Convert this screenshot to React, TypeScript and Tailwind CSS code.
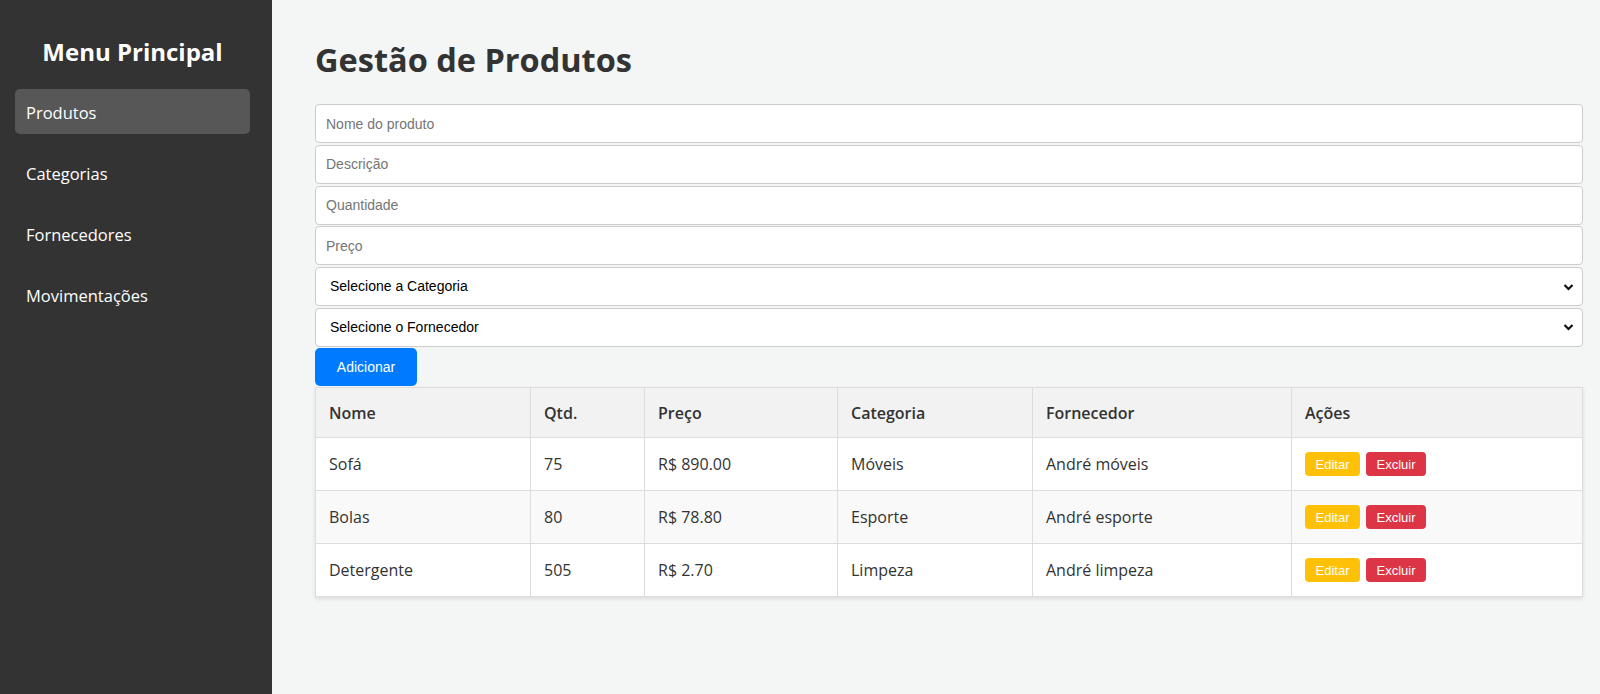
const menu = ["Produtos", "Categorias", "Fornecedores", "Movimentações"];

const produtos = [
  { nome: "Sofá", qtd: 75, preco: "R$ 890.00", categoria: "Móveis", fornecedor: "André móveis" },
  { nome: "Bolas", qtd: 80, preco: "R$ 78.80", categoria: "Esporte", fornecedor: "André esporte" },
  { nome: "Detergente", qtd: 505, preco: "R$ 2.70", categoria: "Limpeza", fornecedor: "André limpeza" },
];

const Chevron = () => (
  <svg className="absolute right-[9px] top-1/2 -translate-y-1/2 pointer-events-none" width="11" height="8" viewBox="0 0 11 8">
    <path d="M1.5 2 L5.5 6 L9.5 2" fill="none" stroke="#111" strokeWidth="2.2" />
  </svg>
);

const inputCls =
  "w-full h-[39px] px-[10px] bg-white border border-[#ccc] rounded-[4px] text-[14px] text-black placeholder:text-[#757575] outline-none";

const App = () => {
  return (
    <div className="flex h-[694px] bg-[#f4f5f5] text-[#333] font-['Open_Sans',sans-serif]">
      {/* Sidebar */}
      <aside className="w-[272px] shrink-0 bg-[#333] pl-[15px] pr-[22px] pt-[36px]">
        <h2 className="text-center text-white font-bold text-[24px] leading-[32px] mb-[21px]">Menu Principal</h2>
        <ul>
          {menu.map((item, i) => (
            <li
              key={item}
              className={`h-[45px] flex items-center pl-[11px] pt-[3px] mb-[16px] rounded-[5px] text-white text-[16.5px] ${
                i === 0 ? "bg-[#575757]" : ""
              }`}
            >
              {item}
            </li>
          ))}
        </ul>
      </aside>

      {/* Content */}
      <main className="flex-1 pl-[43px] pr-[17px] pt-[40px]">
        <h1 className="text-[32.5px] leading-[40px] font-bold text-[#333] mb-[24px]">Gestão de Produtos</h1>

        <div className="flex flex-col gap-[1.8px] font-['Liberation_Sans',Arial,sans-serif]">
          <input className={inputCls} placeholder="Nome do produto" />
          <input className={inputCls} placeholder="Descrição" />
          <input className={inputCls} placeholder="Quantidade" />
          <input className={inputCls} placeholder="Preço" />
          <div className="relative">
            <select className={`${inputCls} appearance-none pl-[14px]`} defaultValue="">
              <option value="">Selecione a Categoria</option>
            </select>
            <Chevron />
          </div>
          <div className="relative">
            <select className={`${inputCls} appearance-none pl-[14px]`} defaultValue="">
              <option value="">Selecione o Fornecedor</option>
            </select>
            <Chevron />
          </div>
        </div>

        <button className="mt-[1.5px] h-[38px] w-[102px] rounded-[5px] bg-[#007bff] text-white text-[14px] font-['Liberation_Sans',Arial,sans-serif]">
          Adicionar
        </button>

        <table className="mt-[1px] w-full border-collapse bg-white text-[16px] shadow-[0_2px_4px_rgba(0,0,0,0.1)]">
          <thead>
            <tr className="bg-[#f2f2f2]">
              <th className="w-[215px] h-[50px] px-[13px] text-left font-semibold border border-[#ddd]">Nome</th>
              <th className="w-[114px] h-[50px] px-[13px] text-left font-semibold border border-[#ddd]">Qtd.</th>
              <th className="w-[193px] h-[50px] px-[13px] text-left font-semibold border border-[#ddd]">Preço</th>
              <th className="w-[195px] h-[50px] px-[13px] text-left font-semibold border border-[#ddd]">Categoria</th>
              <th className="w-[259px] h-[50px] px-[13px] text-left font-semibold border border-[#ddd]">Fornecedor</th>
              <th className="h-[50px] px-[13px] text-left font-semibold border border-[#ddd]">Ações</th>
            </tr>
          </thead>
          <tbody>
            {produtos.map((p, i) => (
              <tr key={p.nome} className={i === 1 ? "bg-[#f9f9f9]" : "bg-white"}>
                <td className="h-[53px] px-[13px] border border-[#ddd]">{p.nome}</td>
                <td className="h-[53px] px-[13px] border border-[#ddd]">{p.qtd}</td>
                <td className="h-[53px] px-[13px] border border-[#ddd]">{p.preco}</td>
                <td className="h-[53px] px-[13px] border border-[#ddd]">{p.categoria}</td>
                <td className="h-[53px] px-[13px] border border-[#ddd]">{p.fornecedor}</td>
                <td className="h-[53px] px-[13px] border border-[#ddd]">
                  <div className="flex gap-[6px] font-['Liberation_Sans',Arial,sans-serif] text-[13px] text-white">
                    <button className="h-[24px] w-[55px] rounded-[4px] bg-[#ffc107]">Editar</button>
                    <button className="h-[24px] w-[60px] rounded-[4px] bg-[#dc3545]">Excluir</button>
                  </div>
                </td>
              </tr>
            ))}
          </tbody>
        </table>
      </main>
    </div>
  );
};

export default App;
